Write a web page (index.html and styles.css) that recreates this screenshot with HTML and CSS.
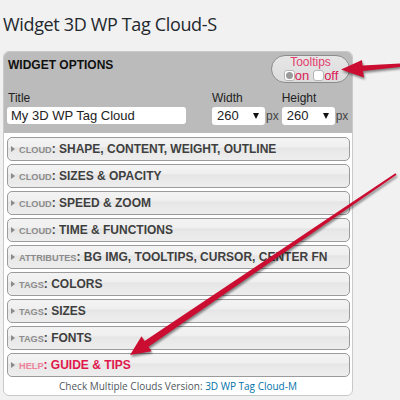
FILE: index.html
```html
<!DOCTYPE html>
<html>
<head>
<meta charset="utf-8">
<title>Widget 3D WP Tag Cloud-S</title>
<link rel="stylesheet" href="styles.css">
</head>
<body>
<h2 class="page-title">Widget 3D WP Tag Cloud-S</h2>
<div class="panel">
  <div class="panel-head">
    <div class="head-top">
      <div class="head-title">WIDGET OPTIONS</div>
      <div class="tips">
        <div class="tips-label">Tooltips</div>
        <div class="tips-opts">
          <span class="radio checked"></span><span class="opt">on</span>
          <span class="radio second"></span><span class="opt">off</span>
        </div>
      </div>
    </div>
    <div class="fields">
      <div class="field f-title">
        <div class="lbl">Title</div>
        <div class="input">My 3D WP Tag Cloud</div>
      </div>
      <div class="field f-width">
        <div class="lbl">Width</div>
        <div class="sel-row"><div class="select"><span>260</span><span class="caret"></span></div><span class="px">px</span></div>
      </div>
      <div class="field f-height">
        <div class="lbl">Height</div>
        <div class="sel-row"><div class="select"><span>260</span><span class="caret"></span></div><span class="px">px</span></div>
      </div>
    </div>
  </div>
  <div class="rows">
    <div class="row"><span class="tri"></span><span class="cat">CLOUD</span><span class="name">: SHAPE, CONTENT, WEIGHT, OUTLINE</span></div>
    <div class="row"><span class="tri"></span><span class="cat">CLOUD</span><span class="name">: SIZES &amp; OPACITY</span></div>
    <div class="row"><span class="tri"></span><span class="cat">CLOUD</span><span class="name">: SPEED &amp; ZOOM</span></div>
    <div class="row"><span class="tri"></span><span class="cat">CLOUD</span><span class="name">: TIME &amp; FUNCTIONS</span></div>
    <div class="row"><span class="tri"></span><span class="cat">ATTRIBUTES</span><span class="name">: BG IMG, TOOLTIPS, CURSOR, CENTER FN</span></div>
    <div class="row"><span class="tri"></span><span class="cat">TAGS</span><span class="name">: COLORS</span></div>
    <div class="row"><span class="tri"></span><span class="cat">TAGS</span><span class="name">: SIZES</span></div>
    <div class="row"><span class="tri"></span><span class="cat">TAGS</span><span class="name">: FONTS</span></div>
    <div class="row help"><span class="tri"></span><span class="cat">HELP</span><span class="name">: GUIDE &amp; TIPS</span></div>
  </div>
  <div class="foot">Check Multiple Clouds Version: <a class="foot-link">3D WP Tag Cloud-M</a></div>
</div>
<svg class="arrows" width="400" height="400" viewBox="0 0 400 400">
  <polygon points="400,63.5 362.5,65.5 362,60 341,69.5 364,77.5 363,71 400,67" />
  <polygon points="130,355 141.5,336.3 144.6,340.9 395.4,173.2 396.6,174.8 148.5,346.7 151.6,351.2" />
</svg>
</body>
</html>
```

FILE: styles.css
```css
html, body {
  margin: 0;
  padding: 0;
}
body {
  background: #f1f1f1;
  font-family: "Liberation Sans", Arial, sans-serif;
  width: 400px;
  height: 400px;
  position: relative;
  overflow: hidden;
}
.page-title {
  margin: 0 0 15px 0;
  padding: 13px 0 0 3px;
  font-family: "Open Sans", "DejaVu Sans", sans-serif;
  font-weight: 400;
  font-size: 18px;
  letter-spacing: -0.35px;
  line-height: 23px;
  color: #23282d;
}
.panel {
  margin-left: 3px;
  width: 348px;
  border: 1px solid #c9c9c9;
  border-radius: 6px;
  background: #fff;
  overflow: hidden;
}
.panel-head {
  height: 81px;
  box-sizing: border-box;
  background: #bbbbbb;
  padding: 3px 2px 0 3px;
}
.head-top {
  display: flex;
  justify-content: space-between;
  align-items: flex-start;
}
.head-title {
  margin: 3px 0 0 1px;
  font-size: 12px;
  line-height: 14px;
  font-weight: bold;
  color: #111;
}
.tips {
  width: 79px;
  height: 28px;
  box-sizing: border-box;
  border: 1px solid #8c8c8c;
  border-radius: 14px;
  background: linear-gradient(#e6e6e6, #dcdcdc);
  display: flex;
  flex-direction: column;
  align-items: center;
}
.tips-label {
  font-size: 12px;
  line-height: 12px;
  color: #e2406c;
}
.tips-opts {
  display: flex;
  align-items: center;
  margin-top: 1px;
  margin-left: 1px;
}
.radio {
  width: 11px;
  height: 11px;
  box-sizing: border-box;
  border: 1px solid #b5b5b5;
  border-radius: 3px;
  background: #fff;
  display: flex;
  align-items: center;
  justify-content: center;
}
.radio.second {
  margin-left: 4px;
}
.radio.checked::after {
  content: "";
  width: 7px;
  height: 7px;
  border-radius: 50%;
  background: #9a9a9a;
}
.opt {
  font-size: 13px;
  line-height: 13px;
  color: #dc1a55;
}
.fields {
  display: flex;
  margin-top: 8px;
}
.lbl {
  font-size: 12px;
  line-height: 14px;
  color: #222;
  margin-bottom: 2px;
}
.f-title {
  width: 179px;
}
.f-title .lbl {
  margin-left: 1px;
}
.f-width {
  margin-left: 26px;
}
.f-height {
  margin-left: 3px;
}
.input {
  height: 17px;
  border-radius: 3px;
  background: #fff;
  padding-left: 4px;
  font-size: 13px;
  line-height: 17px;
  color: #222;
}
.sel-row {
  display: flex;
  align-items: center;
  margin-top: 1px;
}
.select {
  width: 53px;
  height: 18px;
  box-sizing: border-box;
  border-radius: 3px;
  background: #fff;
  padding: 0 6px 0 5px;
  display: flex;
  align-items: center;
  justify-content: space-between;
  font-size: 13px;
  line-height: 18px;
  color: #222;
}
.caret {
  width: 0;
  height: 0;
  border-left: 3.5px solid transparent;
  border-right: 3.5px solid transparent;
  border-top: 6px solid #111;
}
.px {
  margin-left: 1px;
  font-size: 12px;
  line-height: 14px;
  color: #444;
}
.rows {
  margin-top: 4px;
  display: flex;
  flex-direction: column;
  gap: 3px;
}
.row {
  margin: 0 2px 0 3px;
  height: 24px;
  box-sizing: border-box;
  border: 1px solid #9b9b9b;
  border-radius: 5px;
  background: linear-gradient(to bottom, #f3f3f3 0%, #f0f0f0 38%, #e5e5e5 46%, #e9e9e9 62%, #ededed 100%);
  display: flex;
  align-items: center;
  padding-left: 3px;
  white-space: nowrap;
}
.tri {
  width: 0;
  height: 0;
  border-left: 4px solid #8a8a8a;
  border-top: 3.5px solid transparent;
  border-bottom: 3.5px solid transparent;
  margin-right: 4px;
}
.cat {
  font-size: 9.2px;
  font-weight: bold;
  color: #8c8c8c;
  line-height: 14px;
  padding-top: 1px;
}
.name {
  font-size: 12px;
  font-weight: bold;
  color: #3f3f3f;
  line-height: 14px;
}
.help .cat {
  color: #f0829c;
}
.help .name {
  color: #e0174b;
}
.foot {
  height: 18px;
  text-align: center;
  font-family: "Open Sans", "DejaVu Sans", sans-serif;
  font-size: 10px;
  line-height: 18px;
  color: #50575e;
}
.foot-link {
  color: #0073aa;
  text-decoration: none;
}
.arrows {
  position: absolute;
  left: 0;
  top: 0;
  pointer-events: none;
  fill: #cb0d31;
  filter: drop-shadow(1px 2px 1.2px rgba(0, 0, 0, 0.45));
}
```
